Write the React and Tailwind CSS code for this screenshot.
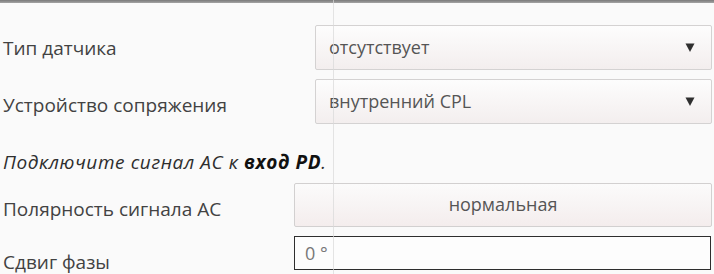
function Arrow() {
  return (
    <svg width="10" height="11" viewBox="0 0 10 11" className="shrink-0">
      <path d="M0.5 1.5 H9.5 L5 10 Z" fill="#2f2f2f" />
    </svg>
  );
}

function Select({ value }) {
  return (
    <div className="ml-[3px] mr-[2px] flex h-[45px] flex-1 items-center justify-between rounded-[2px] border border-[#d4d2d2] bg-gradient-to-b from-[#fdfdfd] to-[#f3eeee] pl-[13px] pr-[16px] text-[18px] text-[#555]">
      <span className="-mt-[2px]">{value}</span>
      <Arrow />
    </div>
  );
}

export default function App() {
  return (
    <div className="relative h-[274px] w-[714px] overflow-hidden bg-[#fafafa] font-['Open_Sans',sans-serif] leading-[26px] text-[#424242]">
      <div className="h-[3px] bg-gradient-to-b from-[#7a7a7a] to-[#a5a5a5]" />

      <div className="mt-[22px] flex items-start">
        <div className="w-[312px] pl-[3px] pt-[10px] text-[19px]">Тип датчика</div>
        <Select value="отсутствует" />
      </div>

      <div className="mt-[9px] flex items-start">
        <div className="w-[312px] pl-[3px] pt-[13px] text-[19px]">Устройство сопряжения</div>
        <Select value="внутренний CPL" />
      </div>

      <div className="mt-[25px] h-[26px] pl-[3px] text-[19px] italic tracking-[0.6px] text-[#2e2e2e]">
        Подключите сигнал AC к <b className="font-bold text-[#111]">вход PD</b>.
      </div>

      <div className="mt-[8px] flex items-start">
        <div className="w-[294px] pl-[3px] pt-[13px] text-[19px]">Полярность сигнала AC</div>
        <div className="mr-[2px] flex h-[44px] flex-1 items-center justify-center rounded-[2px] border border-[#d2d0d0] bg-gradient-to-b from-[#fbfbfb] to-[#f4eded] text-[18px] text-[#555]">
          <span className="-mt-[2px]">нормальная</span>
        </div>
      </div>

      <div className="mt-[9px] flex items-start">
        <div className="w-[294px] pl-[3px] pt-[13px] text-[19px]">Сдвиг фазы</div>
        <div className="mr-[3px] flex h-[34px] flex-1 items-center border-[1.5px] border-[#2e2e2e] bg-[#fdfdfd] pl-[10px] text-[18px] text-[#777]">
          0 °
        </div>
      </div>

      <div className="pointer-events-none absolute left-[333px] top-0 h-full w-px bg-[#d8d8d8] opacity-70" />
    </div>
  );
}
